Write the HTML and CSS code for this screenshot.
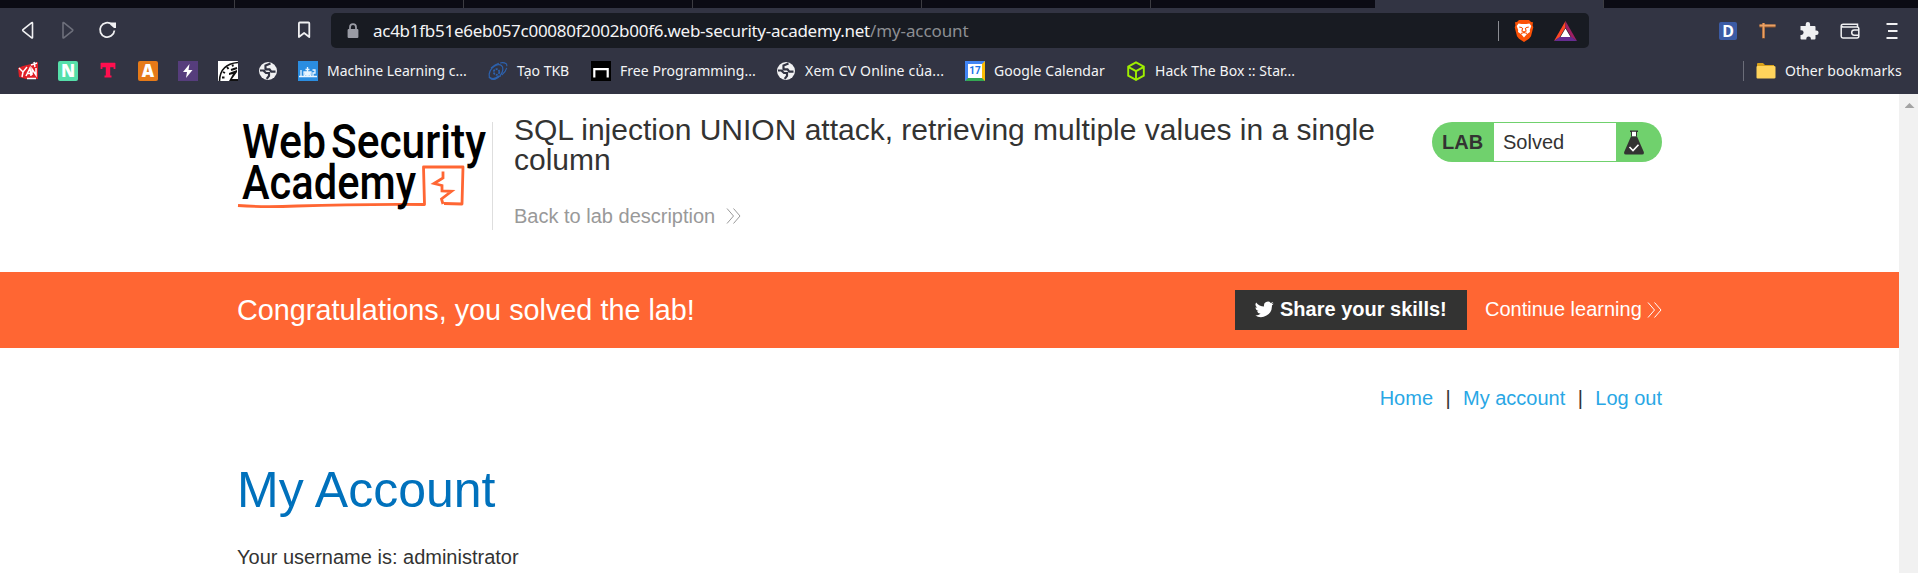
FILE: index.html
```html
<!DOCTYPE html>
<html lang="en">
<head>
<meta charset="utf-8">
<title>SQL injection UNION attack, retrieving multiple values in a single column</title>
<link rel="stylesheet" href="styles.css">
</head>
<body>
<div class="browser">
  <div class="tabstrip">
    <span class="tab first"></span><span class="tab"></span><span class="tab"></span><span class="tab"></span><span class="tab"></span><span class="tab last"></span><span class="tab active"></span>
  </div>
  <div class="toolbar">
    <svg class="nav-icon" viewBox="0 0 40 35"><path d="M32.5 10v14.500q0 .8-.8.3l-8.700-7q-.6-.6 0-1.100l8.700-7q.8-.4.8.3z" fill="none" stroke="#f0f0f2" stroke-width="1.600"/></svg>
    <svg class="nav-icon" viewBox="0 0 40 35"><path d="M23 10v14.500q0 .8.8.3l8.700-7q.6-.6 0-1.100l-8.700-7q-.8-.4-.8.3z" fill="none" stroke="#6d6f7b" stroke-width="1.600"/></svg>
    <svg class="nav-icon" viewBox="0 0 40 35"><path d="M32 11.500A7.200 7.200 0 1 0 34.400 17.500" fill="none" stroke="#f0f0f2" stroke-width="1.800"/><path d="M30.500 9.500h5.500v5.500h-2l-3.500-3z" fill="#f0f0f2"/></svg>
    <svg class="save-icon" viewBox="0 0 24 35"><path d="M6.900 10.400q0-.9.900-.9h8.600q.9 0 .9.900v13.600l-5.200-4-5.200 4z" fill="none" stroke="#f0f0f2" stroke-width="1.800" stroke-linejoin="round"/></svg>
    <div class="address">
      <svg class="lock" viewBox="0 0 12 16"><path d="M3 7V4.200a3 3 0 0 1 6 0V7" fill="none" stroke="#9a9ca5" stroke-width="1.800"/><rect x=".6" y="6" width="10.800" height="9" rx="1" fill="#9a9ca5"/></svg>
      <div class="url"><span class="host">ac4b1fb51e6eb057c00080f2002b00f6.web-security-academy.net</span><span class="path">/my-account</span></div>
      <span class="address-divider"></span>
      <svg class="brave" viewBox="0 0 20 23"><path d="M5 1h10l2 2 2 .2-.4 3 .7 2-2.300 9-2 2.500-5 3.300-5-3.300-2-2.500L.7 8.200l.7-2L1 3.200 3 3z" fill="#fb5106"/><path d="M4.600 4.600 7.500 5h5l2.900-.4L17.300 7l-1.500 4 .2 2-3.300 2.200-2.700 3.300-2.700-3.300L4 13l.2-2-1.500-4z" fill="#fff"/><path d="M5.200 8l3 .7M14.800 8l-3 .7M8.700 9l-.8 3 2.100 1 2.100-1-.8-3M7 14.500l3-1 3 1" fill="none" stroke="#fb5106" stroke-width="1.100"/></svg>
      <svg class="bat" viewBox="0 0 23 20"><path d="M11.500 0 0 20l5.500-3.500 6-10z" fill="#ff4724"/><path d="M11.500 0 23 20l-5.500-3.500-6-10z" fill="#9e1f63"/><path d="M0 20h23l-5.500-4h-12z" fill="#662d91"/><path d="M11.500 7.500 6.500 16h10z" fill="#fff"/></svg>
    </div>
    <div class="extensions">
      <span class="ext-d">D</span>
      <svg class="ext" viewBox="0 0 20 20"><path d="M1.500 5h16M5.500 2v15.500" fill="none" stroke="#8d552d" stroke-width="3"/><path d="M1.500 4.500h16M5.500 2v15" fill="none" stroke="#eaa064" stroke-width="1.800"/></svg>
      <svg class="ext" viewBox="0 0 20 20"><path d="M1.500 5h5.200V3.300a2.200 2.200 0 0 1 4.400 0V5h4.400q1 0 1 1v3.500h.8a2.300 2.300 0 0 1 0 4.600h-.8v3.400q0 1-1 1h-3.600v-.8a2.300 2.300 0 0 0-4.600 0v.8H2.500q-1 0-1-1v-3.600h.8a2.300 2.300 0 0 0 0-4.600h-.8z" fill="#f0f0f2"/></svg>
      <svg class="ext" viewBox="0 0 20 20"><path d="M17.500 6V3.200H3.200Q1.200 3.200 1.200 5v10.300q0 1.700 1.700 1.700H17q1.800 0 1.800-1.700V7.500Q18.800 6 17 6H3.500Q1.500 6 1.200 4.600M18.800 9h-4.500a2.600 2.600 0 0 0 0 5.200h4.500" fill="none" stroke="#f0f0f2" stroke-width="1.500"/></svg>
      <svg class="ext" viewBox="0 0 20 20"><path d="M5.500 3h11M7 10h9.500M5.500 17h11" stroke="#f0f0f2" stroke-width="1.800"/></svg>
    </div>
  </div>
  <div class="bookmarks">
    <a class="mark"><svg viewBox="0 0 20 20"><path d="M0 7 5 5l12-3 3-1v17H8L1 16z" fill="#e01f26"/><path d="M1 7l4 4 4-5M5 11l-1 5M8 15l4-8 1 8M8.500 12.500h5M14 14V8l4 6V7M13 4l6-2M16 1l1 5M9 17.500h9" fill="none" stroke="#fff" stroke-width="1.500"/></svg></a>
    <a class="mark"><span class="fav green">N</span></a>
    <a class="mark"><svg viewBox="0 0 20 20"><path d="M3 4h14M10 3v13" fill="none" stroke="#ff0f4f" stroke-width="4.400"/><path d="M3.500 2v6M16.500 2v6M6.500 15.500h7" stroke="#ff0f4f" stroke-width="1.800"/></svg></a>
    <a class="mark"><span class="fav orange">A</span></a>
    <a class="mark"><svg viewBox="0 0 20 20"><path d="M0 0h20v20H0z" fill="#563d7c"/><path d="M11.500 3 5 11h4l-1 6 6.500-8h-4z" fill="#fff"/></svg></a>
    <a class="mark"><svg viewBox="0 0 20 20"><path d="M0 0h20v20H0z" fill="#fff"/><path d="M1.500 20Q2 3 20 1.500" fill="none" stroke="#111" stroke-width="1.600"/><path d="M5 11l2 1M9 6l1.500 2M14.500 3.500l.5 2M4 16.500h2.500M13 9l6-2" fill="none" stroke="#111" stroke-width="1.900"/><path d="M11 12l8-3v2l-5 7h6v2h-9l4-7-4 1z" fill="#111"/></svg></a>
    <a class="mark"><svg viewBox="0 0 20 20"><circle cx="10" cy="10" r="9" fill="#f1f1f3"/><path d="M12.500 2.500 7.500 4.500v3.800h4l1.800 2.400h4.200M2 9.500h3.300l2.700 2.500h3v2.800l-2.300 3" fill="none" stroke="#323443" stroke-width="2.200"/></svg></a>
    <a class="mark"><svg viewBox="0 0 20 20"><path d="M0 0h20v20H0z" fill="#2b8de0"/><path d="M3 9v6M1 15.500h18M14.500 9H17v3h-2v3M6 11h7v2q0 2.500-3.500 2.500T6 13zM9.500 6v5M7.500 8.500h4" fill="none" stroke="#e9f5ff" stroke-width="1.300"/><path d="M6.500 11h6v2.500q-3 3-6 0z" fill="#e9f5ff"/></svg><span>Machine Learning c...</span></a>
    <a class="mark"><svg viewBox="0 0 20 20"><g fill="none" stroke="#2d62ae"><ellipse cx="8" cy="11" rx="8.500" ry="5.500" transform="rotate(-50 8 11)" stroke-width="1.200"/><path d="M3 7Q13-1 18.500 3q2 6-6.500 12.500" stroke-width="1.100" stroke-dasharray="9 1.500"/><circle cx="8.500" cy="11" r="2.800" stroke-width="1.800" stroke-dasharray="2 1"/><path d="M1 16q4 4 10-1" stroke-width="1.700"/></g></svg><span>Tạo TKB</span></a>
    <a class="mark"><svg viewBox="0 0 20 20"><path d="M0 0h20v20H0z" fill="#000"/><path d="M3.300 16.500V8.200h13.400v8.300" fill="none" stroke="#fff" stroke-width="2.200"/></svg><span class="wide">Free Programming...</span></a>
    <a class="mark"><svg viewBox="0 0 20 20"><circle cx="10" cy="10" r="9" fill="#f1f1f3"/><path d="M12.500 2.500 7.500 4.500v3.800h4l1.800 2.400h4.200M2 9.500h3.300l2.700 2.500h3v2.800l-2.300 3" fill="none" stroke="#323443" stroke-width="2.200"/></svg><span class="wider">Xem CV Online của...</span></a>
    <a class="mark"><span class="calendar">17</span><span class="wide">Google Calendar</span></a>
    <a class="mark"><svg viewBox="0 0 20 20"><path d="M10 1.300 17.800 5.600v9L10 18.900 2.200 14.600v-9zM2.200 5.800 10 10.200l7.800-4.400M10 10.200v8.500" fill="none" stroke="#9fef00" stroke-width="1.900"/></svg><span class="wide">Hack The Box :: Star...</span></a>
    <a class="mark other"><svg viewBox="0 0 20 20"><path d="M1 17V3q0-1 1-1h5l2 2h9v13z" fill="#d9a21b"/><path d="M.5 6q0-1 1-1H18q1.500 0 1.500 1v10.500q0 1-1.500 1H1.500q-1 0-1-1z" fill="#ffd45c"/></svg><span class="wide">Other bookmarks</span></a>
  </div>
</div>
<div class="viewport">
  <main class="page">
    <header class="lab-header">
      <svg class="logo" viewBox="0 0 255 108">
        <path d="M1 83.500Q25 85.500 60 84q60-2 127.500-1.500L186.500 45H226l-1 37-18-.5" fill="none" stroke="#ff6633" stroke-width="2.800" stroke-linejoin="round"/>
        <path d="M206 49.500v6.500l-9 5.500 8 2v5.500l9.500.3-10 7.700 1.500 5" fill="none" stroke="#ff6633" stroke-width="2.800"/>
        <g class="logo-text">
          <text x="5" y="36" textLength="84" lengthAdjust="spacingAndGlyphs">Web</text>
          <text x="94" y="36" textLength="155" lengthAdjust="spacingAndGlyphs">Security</text>
          <text x="5" y="76.500" textLength="174" lengthAdjust="spacingAndGlyphs">Academy</text>
        </g>
      </svg>
      <div class="title-block">
        <h2>SQL injection UNION attack, retrieving multiple values in a single column</h2>
        <a class="back"><span>Back to lab description</span><svg class="chevrons" viewBox="0 0 15 16"><path d="M1 .5 7.500 8 1 15.500M7.500 .5 14 8l-6.500 7.500"/></svg></a>
      </div>
      <div class="badge">
        <b>LAB</b><span class="status">Solved</span>
        <svg class="flask" viewBox="0 0 20 25"><path d="M6 .5h8v1.400h-1V6.500H7V1.900H6z" fill="#333332"/><path d="M8 1.800h4v4.700H8z" fill="#fff"/><path d="M7 6.500h6L19.800 22q.6 2.500-1.800 2.500H2Q-.4 24.500.2 22z" fill="#333332"/><path d="M5.500 17l3.500 3.500 5.500-5.800" fill="none" stroke="#fff" stroke-width="1.600"/></svg>
      </div>
    </header>
    <section class="banner">
      <h4>Congratulations, you solved the lab!</h4>
      <a class="share"><svg class="bird" viewBox="0 0 24 20"><path d="M23.600 2.400a9.700 9.700 0 0 1-2.800.8A4.900 4.900 0 0 0 23 .5a9.800 9.800 0 0 1-3.100 1.200 4.900 4.900 0 0 0-8.400 4.500A13.900 13.900 0 0 1 1.400 1.100a4.900 4.900 0 0 0 1.500 6.500 4.900 4.900 0 0 1-2.200-.6 4.900 4.900 0 0 0 3.900 4.900 4.900 4.900 0 0 1-2.200.1 4.900 4.900 0 0 0 4.600 3.400A9.800 9.800 0 0 1 0 17.400a13.900 13.900 0 0 0 21.400-12.400 10 10 0 0 0 2.200-2.600z" fill="#fff"/></svg><span>Share your skills!</span></a>
      <a class="continue"><span>Continue learning</span><svg class="chevrons" viewBox="0 0 15 16"><path d="M1 .5 7.500 8 1 15.500M7.500 .5 14 8l-6.500 7.500"/></svg></a>
    </section>
    <nav class="links"><a>Home</a><i>|</i><a>My account</a><i>|</i><a>Log out</a></nav>
    <h1>My Account</h1>
    <p class="username">Your username is: administrator</p>
  </main>
  <div class="scrollbar"><span class="arrow"></span></div>
</div>
</body>
</html>
```

FILE: styles.css
```css
* { box-sizing: border-box; }
body { margin: 0; height: 573px; overflow: hidden; background: #fff; color: #333332; font-family: "Liberation Sans", Arial, sans-serif; }
svg { display: block; flex: none; }
h1, h2, h4, p { margin: 0; font-weight: 400; }

.browser { width: 1918px; height: 94px; background: #323443; color: #f4f4f6; font-family: "Noto Sans", "Open Sans", sans-serif; }
.tabstrip { display: flex; height: 8px; background: #0b0b14; }
.tab { flex: none; width: 229px; border-right: 1px solid #3c3c42; }
.tab.first { width: 235px; }
.tab.last { width: 224px; border: 0; }
.tab.active { background: #323443; }

.toolbar { display: flex; height: 40px; padding-top: 5px; }
.nav-icon { width: 40px; height: 35px; }
.save-icon { width: 24px; height: 35px; margin-left: 172px; }
.address { display: flex; align-items: center; width: 1258px; height: 35px; margin-left: 15px; padding-left: 16px; border-radius: 5px; background: #181b22; }
.lock { width: 12px; height: 16px; margin-right: 14px; }
.url { width: 1125px; font-size: 17px; line-height: 34px; white-space: nowrap; }
.host { letter-spacing: -0.27px; }
.path { color: #8c8e93; letter-spacing: -0.1px; }
.address-divider { width: 1px; height: 20px; background: #8b8d93; }
.brave { width: 20px; height: 23px; margin-left: 15px; }
.bat { width: 23px; height: 20px; margin-left: 20px; }
.extensions { display: flex; align-items: center; height: 35px; margin-left: 130px; gap: 21px; }
.ext { width: 20px; height: 20px; }
.ext-d { width: 18px; height: 18px; border-radius: 2px; background: #3b5ba5; color: #fff; font: 700 16px/18px "Noto Sans", sans-serif; text-align: center; }

.bookmarks { display: grid; grid-template-columns: repeat(7, 40px) 190px 103px 185px 189px 161px 617px auto; height: 46px; padding-left: 18px; }
.mark { display: flex; align-items: center; gap: 9px; font-size: 14px; line-height: 20px; white-space: nowrap; }
.mark svg, .fav, .calendar { width: 20px; height: 20px; flex: none; }
.wide { letter-spacing: 0.05px; }
.wider { letter-spacing: 0.2px; }
.fav { border-radius: 2px; color: #fff; font: 800 17px/20px "Open Sans", sans-serif; text-align: center; }
.green { background: #56dfaa; }
.orange { background: #e67a18; }
.calendar { border: 3px solid; border-color: #4285f4 #fbbc04 #34a853 #4285f4; background: #fff; color: #1a73e8; font: 700 10px/14px Roboto, sans-serif; text-align: center; }
.other { height: 20px; margin-top: 13px; padding-left: 12px; border-left: 1px solid #6b6d79; }

.viewport { display: flex; height: 479px; }
.page { width: 1899px; flex: none; }
.scrollbar { display: flex; justify-content: center; width: 19px; background: #f1f1f1; }
.arrow { width: 10px; height: 5px; margin: 9px 0 0 2px; background: #a3a3a3; clip-path: polygon(50% 0, 100% 100%, 0 100%); }

.lab-header { display: flex; align-items: flex-start; height: 178px; padding: 28px 237px 0; }
.logo { width: 256px; height: 108px; border-right: 1px solid #dedede; overflow: visible; }
.logo-text { font: 500 48px Roboto, sans-serif; fill: #000; }
.title-block { width: 939px; padding: 0 20px 0 21px; margin-top: -7px; }
h2 { font-size: 30px; line-height: 30px; }
.back { display: flex; align-items: center; margin-top: 29px; color: #999; font-size: 20px; line-height: 24px; }
.chevrons { width: 15px; height: 16px; fill: none; stroke: currentColor; stroke-width: 1; }
.back .chevrons { margin-left: 11px; }
.badge { display: flex; align-items: center; width: 230px; height: 40px; border-radius: 20px; background: #70d16d; font-size: 20px; line-height: 38px; }
.badge b { width: 62px; padding-left: 10px; }
.status { width: 122px; height: 38px; padding-left: 9px; background: #fff; }
.flask { width: 20px; height: 25px; margin-left: 8px; }

.banner { display: flex; align-items: center; height: 76px; padding: 0 237px; background: #ff6633; color: #fff; }
h4 { width: 998px; font-size: 28.8px; line-height: 36px; }
.share { display: flex; align-items: center; width: 232px; height: 40px; padding: 0 0 1px 20px; gap: 6px; background: #333332; font-size: 20px; font-weight: 700; }
.bird { width: 19px; height: 17px; }
.continue { display: flex; align-items: center; justify-content: space-between; width: 177px; margin-left: 18px; padding-bottom: 1px; font-size: 20px; }
.links { display: flex; justify-content: flex-end; gap: 12.4px; padding: 38px 237px 0; font-size: 20px; line-height: 24px; }
.links a { color: #29a7e5; }
.links i { font-style: normal; }
h1 { margin: 50px 0 0 237px; color: #0071bc; font-size: 50px; line-height: 60px; }
.username { margin: 25px 0 0 237px; font-size: 20px; line-height: 24px; }
```
